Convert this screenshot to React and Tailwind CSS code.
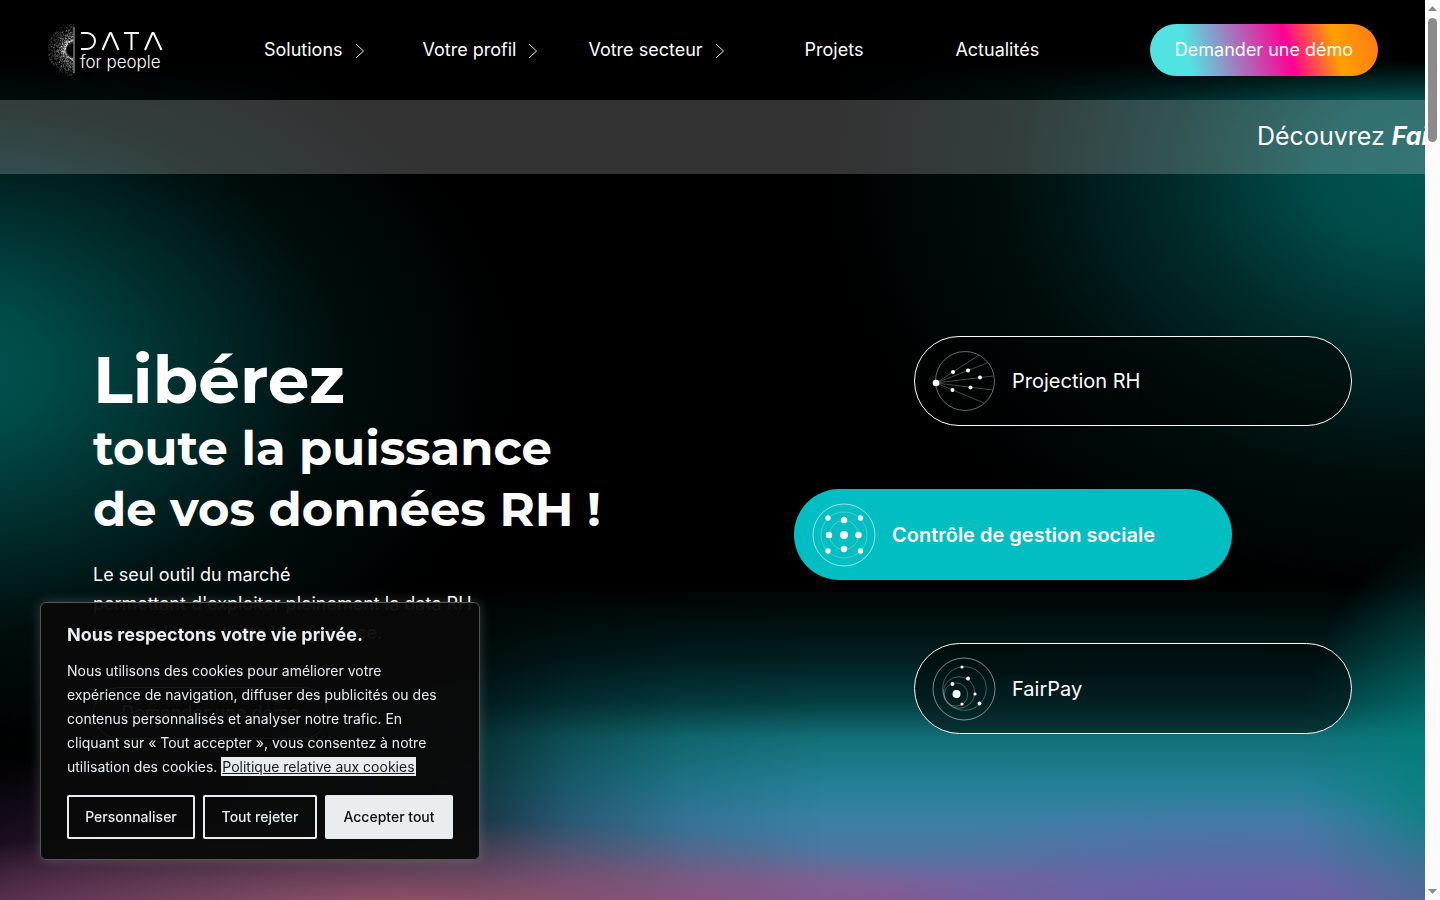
const navItems = [
  { label: "Solutions", chevron: true, gap: "ml-[100px]" },
  { label: "Votre profil", chevron: true, gap: "ml-[58px]" },
  { label: "Votre secteur", chevron: true, gap: "ml-[50px]" },
  { label: "Projets", chevron: false, gap: "ml-20" },
  { label: "Actualités", chevron: false, gap: "ml-[92px]" },
];

const noise = (n) => {
  const v = Math.sin(n * 127.1) * 43758.5453;
  return v - Math.floor(v);
};

// dotted half sun on the left of the logo
const rays = Array.from({ length: 1300 }, (_, i) => {
  const angle = Math.PI / 2 + noise(i + 1) * Math.PI;
  const spread = noise(i * 1.7 + 2000) ** 1.3;
  const r = 8.5 + spread * 18;
  return {
    x: 26 + Math.cos(angle) * r,
    y: 27 + Math.sin(angle) * r,
    o: 0.5 - spread * 0.3,
  };
});

const Logo = () => (
  <a href="#accueil" aria-label="Data for people" className="block">
    <svg width="116" height="54" viewBox="0 0 116 54" fill="none">
      {rays.map((d, i) => (
        <circle key={i} cx={d.x} cy={d.y} r="0.45" fill="#fff" opacity={d.o} />
      ))}
      <path d="M26 4v46" stroke="#777" strokeWidth="1.5" />
      <path d="M26 19.500a8 7.500 0 0 0 0 15" stroke="#888" strokeWidth="0.5" />
      <g stroke="#fff" strokeWidth="2" strokeLinejoin="round">
        <path d="M33 10h6a8 8 0 0 1 0 16h-6" />
        <path d="M54.500 27l7.500-17h1l7.500 17" />
        <path d="M76 10h15M83.500 10v17" />
        <path d="M97 27l7.500-17h1l8 17" />
      </g>
      <text x="32" y="45" fill="#fff" fontSize="17" className="font-light">
        for people
      </text>
    </svg>
  </a>
);

const Chevron = () => (
  <svg width="10" height="16" viewBox="0 0 10 16" fill="none" className="mt-px">
    <path d="M1 1l7.500 7L1 15" stroke="currentColor" strokeWidth="0.9" />
  </svg>
);

const ProjectionIcon = () => (
  <svg width="64" height="64" viewBox="0 0 64 64" fill="none">
    <circle cx="33" cy="32" r="29.500" stroke="#fff" strokeOpacity="0.5" strokeWidth="0.8" />
    <path
      d="M4 34L47 6M4 34L55 14M4 34L61 27M4 34L61 41M4 34L52 54"
      stroke="#fff"
      strokeOpacity="0.4"
      strokeWidth="0.7"
    />
    <g fill="#fff">
      <circle cx="4" cy="34" r="3.300" />
      <circle cx="21" cy="23" r="2" />
      <circle cx="36" cy="21.500" r="2" />
      <circle cx="48" cy="28.500" r="2" />
      <circle cx="38.500" cy="38.500" r="2" />
      <circle cx="20.500" cy="41" r="2" />
    </g>
  </svg>
);

const ControleIcon = () => (
  <svg width="64" height="64" viewBox="0 0 64 64" fill="none">
    <g stroke="#fff" strokeWidth="0.7">
      <circle cx="32" cy="32" r="31" strokeOpacity="0.85" />
      <circle cx="32" cy="32" r="23" strokeOpacity="0.4" />
      <circle cx="32" cy="32" r="14.500" strokeOpacity="0.4" />
    </g>
    <g fill="#fff">
      <circle cx="32" cy="32" r="4" />
      <circle cx="32" cy="17" r="3.200" />
      <circle cx="32" cy="46" r="3.200" />
      <circle cx="17" cy="32" r="3.200" />
      <circle cx="46.500" cy="32" r="3.200" />
      <circle cx="16" cy="15" r="2.700" />
      <circle cx="48.500" cy="15" r="2.700" />
      <circle cx="16" cy="48" r="2.700" />
      <circle cx="48.500" cy="48" r="2.700" />
    </g>
  </svg>
);

const FairPayIcon = () => (
  <svg width="64" height="64" viewBox="0 0 64 64" fill="none">
    <g stroke="#fff" strokeWidth="0.7">
      <circle cx="32" cy="32" r="31" strokeOpacity="0.7" />
      <circle cx="32.500" cy="31.500" r="21.800" strokeOpacity="0.4" />
      <circle cx="27" cy="35.500" r="15.800" strokeOpacity="0.4" />
      <circle cx="24" cy="37.500" r="11.700" strokeOpacity="0.4" />
    </g>
    <g fill="#fff">
      <circle cx="24.500" cy="37" r="4" />
      <circle cx="30" cy="10" r="1.600" />
      <circle cx="36" cy="21.500" r="1.900" />
      <circle cx="20.500" cy="27" r="1.900" />
      <circle cx="43" cy="37" r="1.600" />
      <circle cx="30" cy="47" r="1.600" />
      <circle cx="47.500" cy="46.500" r="1.900" />
    </g>
  </svg>
);

const Header = () => (
  <header className="h-[100px] bg-linear-to-b from-black from-60% to-transparent">
    <div className="flex h-full items-center pl-12 pr-[47px]">
      <Logo />
      <nav className="flex items-center text-lg text-white">
        {navItems.map((item) => (
          <a
            key={item.label}
            href="#menu"
            className={`flex items-center gap-3 whitespace-nowrap ${item.gap}`}
          >
            {item.label}
            {item.chevron && <Chevron />}
          </a>
        ))}
      </nav>
      <button className="ml-auto h-[52px] w-[228px] rounded-full bg-[linear-gradient(75deg,#52e2e2_18%,#ff0095_60%,#ffa000_80%,#ff7816_100%)] text-lg text-white">
        Demander une démo
      </button>
    </div>
  </header>
);

const Banner = () => (
  <div className="flex h-[74px] items-center justify-end overflow-hidden bg-white/20">
    <p className="w-[168px] whitespace-nowrap text-[25px] text-white">
      Découvrez <strong className="italic">FairPay</strong>
    </p>
  </div>
);

const Products = () => (
  <div className="flex w-[558px] flex-col gap-[63px] text-xl text-white">
    <a
      href="#projection"
      className="flex h-[90px] w-[438px] items-center gap-4 self-end rounded-full border border-white bg-black/50 pl-[17px]"
    >
      <ProjectionIcon />
      Projection RH
    </a>
    <a
      href="#controle"
      className="flex h-[91px] w-[438px] items-center gap-4 rounded-full bg-[#00bec2] pl-[18px] font-semibold"
    >
      <ControleIcon />
      Contrôle de gestion sociale
    </a>
    <a
      href="#fairpay"
      className="flex h-[91px] w-[438px] items-center gap-4 self-end rounded-full border border-white bg-black/50 pl-[17px]"
    >
      <FairPayIcon />
      FairPay
    </a>
  </div>
);

const Hero = () => (
  <main className="flex items-start justify-between pl-[93px] pr-[73px] pt-[162px]">
    <div className="pt-[5px] text-white">
      <h1 className="font-['Montserrat',Inter,sans-serif] font-bold">
        <span className="block text-[66px] leading-[77px]">Libérez</span>
        <span className="block text-5xl leading-[61px]">
          toute la puissance
          <br />
          de vos données RH !
        </span>
      </h1>
      <p className="mt-5 text-lg leading-[29px]">
        Le seul outil du marché
        <br />
        permettant d'exploiter pleinement la data RH
        <br />
        pour en libérer toute la puissance.
      </p>
      <button className="mt-10 h-[52px] w-[235px] rounded-full border border-white text-lg">
        Demander une démo
      </button>
    </div>
    <Products />
  </main>
);

const CookieNotice = () => (
  <section
    aria-label="Cookies"
    className="fixed bottom-10 left-10 w-[440px] rounded-md border border-[#565656] bg-[#090a0a]/95 px-[26px] pb-5 pt-[18px] text-[#e9edf0] shadow-[0_0_12px_rgba(172,171,171,0.3)]"
  >
    <h2 className="text-lg font-bold leading-7">Nous respectons votre vie privée.</h2>
    <p className="mt-[10px] text-sm leading-6">
      Nous utilisons des cookies pour améliorer votre
      <br />
      expérience de navigation, diffuser des publicités ou des
      <br />
      contenus personnalisés et analyser notre trafic. En
      <br />
      cliquant sur « Tout accepter », vous consentez à notre
      <br />
      utilisation des cookies.{" "}
      <a href="#cookies" className="border border-[#e9edf0] bg-[#e9edf0] text-[#171a1c] underline">
        Politique relative aux cookies
      </a>
    </p>
    <div className="mt-4 flex gap-2 text-sm font-medium">
      <button className="h-11 w-32 rounded-xs border-2 border-[#e9edf0]">Personnaliser</button>
      <button className="h-11 w-[114px] rounded-xs border-2 border-[#e9edf0]">Tout rejeter</button>
      <button className="h-11 w-32 rounded-xs bg-[#e9edf0] text-[#0b0d0f]">Accepter tout</button>
    </div>
  </section>
);

const ScrollRail = () => (
  <div className="flex w-[15px] shrink-0 flex-col items-center justify-between bg-[#fcfcfc] py-1.5">
    <div className="flex flex-col items-center gap-[7px]">
      <svg width="9" height="5" viewBox="0 0 9 5" fill="#8b8b8b">
        <path d="M0 5L4.500 0 9 5z" />
      </svg>
      <div className="h-[124px] w-[9px] rounded-full bg-[#8b8b8b]" />
    </div>
    <svg width="9" height="5" viewBox="0 0 9 5" fill="#8b8b8b">
      <path d="M0 0h9L4.500 5z" />
    </svg>
  </div>
);

const App = () => {
  return (
    <div className="flex h-screen overflow-hidden bg-black font-['Inter',sans-serif]">
      {/* side glows, then the bottom hues, the dark left corner and the vertical blend under them */}
      <div className="min-w-0 flex-1 bg-[radial-gradient(ellipse_40%_42%_at_-4%_41%,#005451_0%,#004b48_18%,#003a38cc_42%,#00161699_70%,transparent_100%),radial-gradient(ellipse_42%_48%_at_100%_19%,#005552_0%,#004c4a_18%,#003533cc_42%,#00161699_70%,transparent_100%),radial-gradient(ellipse_42%_11%_at_28%_102%,#a35a6c_0%,#93597599_45%,#93597500_100%),radial-gradient(ellipse_28%_20%_at_4%_104%,#4a2148_0%,#3a204480_50%,#3a204400_100%),radial-gradient(ellipse_24%_13%_at_86%_101%,#6660ac_0%,#5c66aa80_45%,#5c66aa00_100%),radial-gradient(ellipse_12%_28%_at_103%_86%,#008078_0%,#00807866_55%,#00807800_100%),linear-gradient(to_right,#000_0%,#000000e6_15%,#00000099_33%,#0000004d_40%,#0000001a_48%,transparent_58%),linear-gradient(to_bottom,transparent_65%,#000c0c_68%,#011e1f_73%,#043e42_78%,#127078_82%,#237f95_87%,#3a80a5_91%,#5075a0_95%,#77629b_98%,#805a9a_100%)]">
        <Header />
        <Banner />
        <Hero />
      </div>
      <ScrollRail />
      <CookieNotice />
    </div>
  );
};

export default App;
